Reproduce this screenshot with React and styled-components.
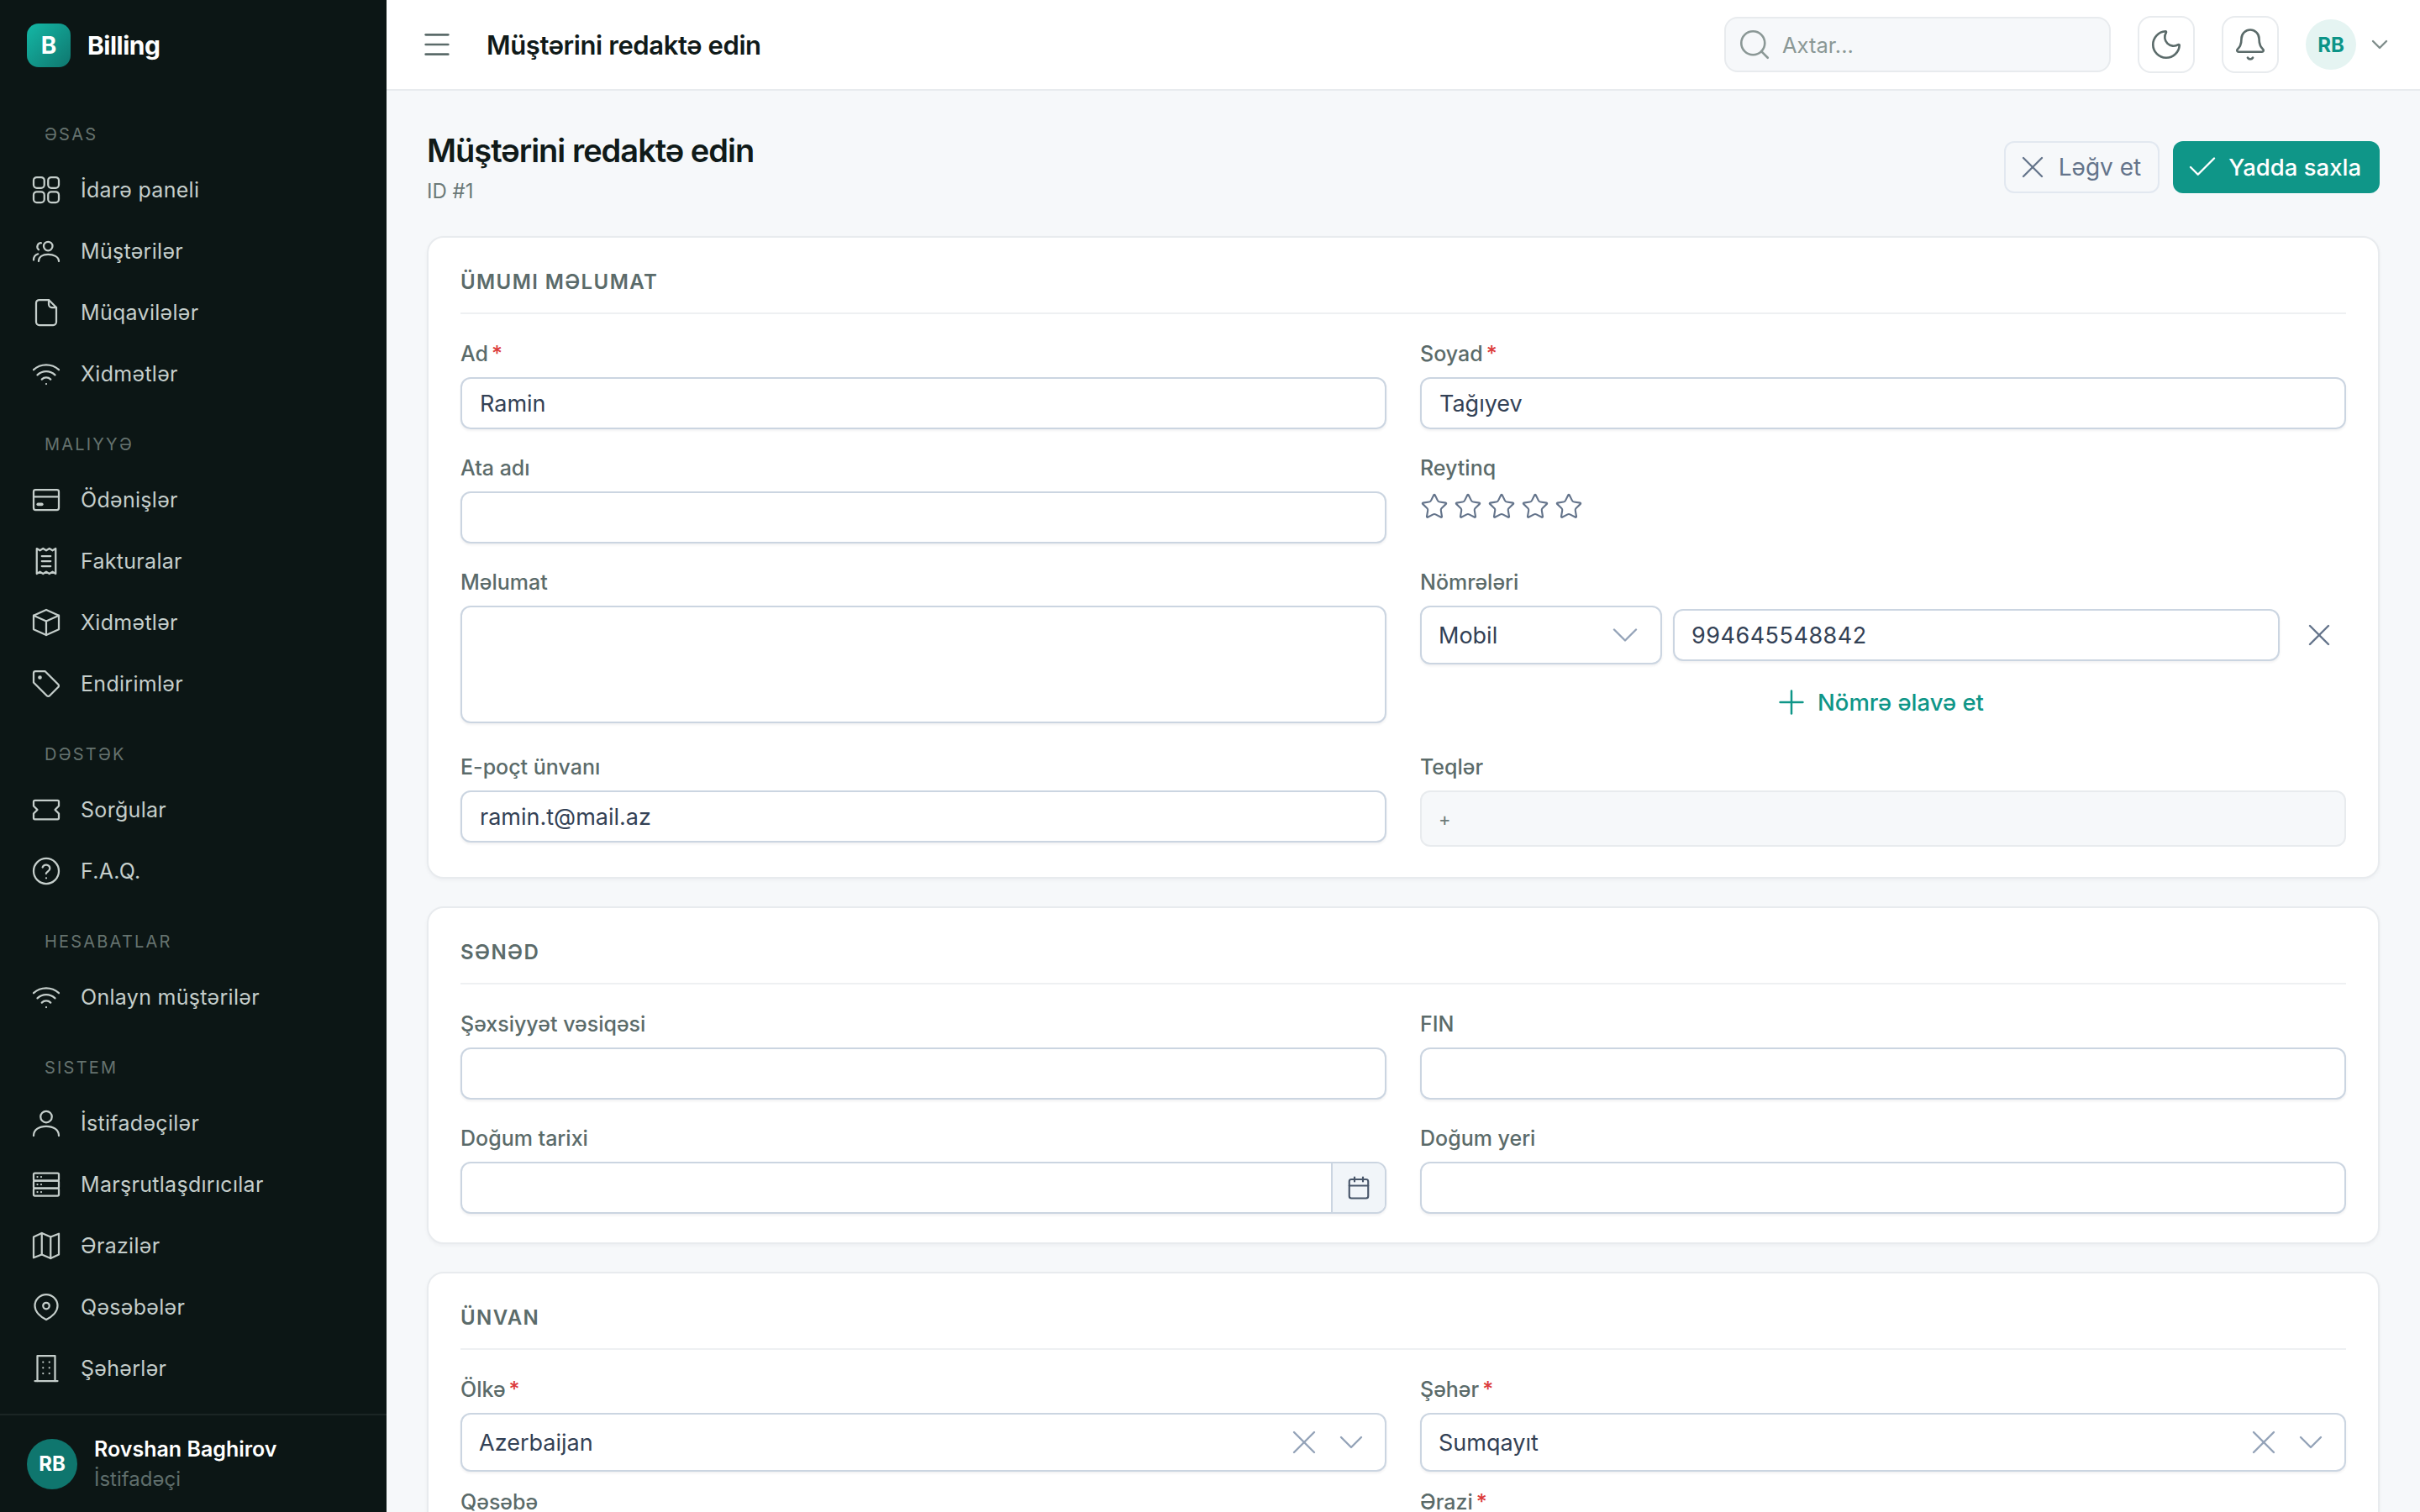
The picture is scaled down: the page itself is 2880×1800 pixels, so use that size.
import React from 'react';
import styled, { createGlobalStyle } from 'styled-components';
import { Search, Moon, Bell, ChevronDown, X, Check, Plus, Star, Calendar, Menu } from 'lucide-react';

const GlobalStyle = createGlobalStyle`
  * { box-sizing: border-box; }
  html, body { margin: 0; padding: 0; height: 1800px; overflow: hidden; background: #f6f8fa; }
  body { font-family: Inter, "Noto Sans", sans-serif; }
`;

const Shell = styled.div`
  display: flex;
  width: 2880px;
  height: 1800px;
  overflow: hidden;
`;

const Sidebar = styled.aside`
  width: 460px;
  flex-shrink: 0;
  height: 100%;
  background: #0c1615;
  display: flex;
  flex-direction: column;
`;

const Brand = styled.div`
  height: 108px;
  padding-left: 32px;
  display: flex;
  align-items: center;
  gap: 20px;
  flex-shrink: 0;
`;

const LogoMark = styled.div`
  width: 52px;
  height: 52px;
  border-radius: 14px;
  background: linear-gradient(135deg, #14b8a6, #0f766e);
  color: #fff;
  font-size: 28px;
  font-weight: 700;
  display: flex;
  align-items: center;
  justify-content: center;
`;

const BrandName = styled.div`
  color: #fff;
  font-size: 30px;
  font-weight: 700;
  letter-spacing: -0.5px;
`;

const Nav = styled.nav`
  flex: 1;
  overflow: hidden;
  padding-top: 37px;
`;

const NavSection = styled.div`
  margin-bottom: 33px;
`;

const SectionLabel = styled.div`
  height: 30px;
  line-height: 30px;
  margin-bottom: 14px;
  padding-left: 53px;
  font-size: 20px;
  font-weight: 400;
  letter-spacing: 2.2px;
  color: #66736f;
`;

const NavItem = styled.div`
  height: 73px;
  padding-left: 37px;
  display: flex;
  align-items: center;
  gap: 23px;
  color: #c5cecb;
  font-size: 25px;
  letter-spacing: 0.3px;
`;

const NavIcon = styled.svg`
  width: 36px;
  height: 36px;
  flex-shrink: 0;
  fill: none;
  stroke: #c5cecb;
  stroke-width: 1.5;
  stroke-linecap: round;
  stroke-linejoin: round;
`;

const UserFooter = styled.div`
  height: 117px;
  flex-shrink: 0;
  border-top: 2px solid #1b2524;
  padding-left: 32px;
  display: flex;
  align-items: center;
  gap: 20px;
`;

const UserAvatar = styled.div`
  width: 60px;
  height: 60px;
  border-radius: 50%;
  background: #0f766e;
  color: #fff;
  font-size: 24px;
  font-weight: 700;
  display: flex;
  align-items: center;
  justify-content: center;
`;

const UserInfo = styled.div`
  display: flex;
  flex-direction: column;
  gap: 6px;
`;

const UserName = styled.div`
  color: #fff;
  font-size: 25px;
  font-weight: 600;
  line-height: 30px;
`;

const UserRole = styled.div`
  color: #5f6e6c;
  font-size: 24px;
  line-height: 30px;
`;

const Main = styled.div`
  flex: 1;
  min-width: 0;
  display: flex;
  flex-direction: column;
`;

const Header = styled.header`
  height: 108px;
  flex-shrink: 0;
  background: #fff;
  border-bottom: 2px solid #e8ebee;
  display: flex;
  align-items: center;
  padding: 0 32px 0 40px;
`;

const MenuButton = styled.div`
  display: flex;
  color: #5b6b6a;
  margin-right: 39px;
`;

const HeaderTitle = styled.div`
  flex: 1;
  font-size: 31px;
  font-weight: 600;
  color: #101a19;
  letter-spacing: -0.4px;
`;

const SearchBox = styled.div`
  width: 460px;
  height: 66px;
  background: #f6f8fa;
  border: 2px solid #e8ebee;
  border-radius: 16px;
  display: flex;
  align-items: center;
  gap: 12px;
  padding-left: 13px;
  color: #8b9896;
  font-size: 25.5px;
  margin-right: 32px;
`;

const IconButton = styled.div`
  width: 68px;
  height: 68px;
  background: #fff;
  border: 2px solid #e8ebee;
  border-radius: 16px;
  display: flex;
  align-items: center;
  justify-content: center;
  color: #5b6b6a;
  margin-right: 32px;
`;

const HeaderAvatar = styled.div`
  width: 60px;
  height: 60px;
  border-radius: 50%;
  background: #e5f4f2;
  color: #0d9488;
  font-size: 24px;
  font-weight: 700;
  display: flex;
  align-items: center;
  justify-content: center;
`;

const HeaderChevron = styled.div`
  display: flex;
  margin-left: 12px;
  color: #7f8d8b;
`;

const Content = styled.main`
  flex: 1;
  overflow: hidden;
  padding: 0 48px;
`;

const PageHead = styled.div`
  height: 173px;
  display: flex;
  align-items: flex-start;
  justify-content: space-between;
`;

const PageTitleBlock = styled.div`
  padding-top: 46px;
`;

const PageTitle = styled.h1`
  margin: 0;
  font-size: 38px;
  line-height: 50px;
  font-weight: 600;
  letter-spacing: -1px;
  color: #101a19;
`;

const PageSub = styled.div`
  margin-top: 9px;
  font-size: 24px;
  line-height: 30px;
  color: #6c7a78;
`;

const PageActions = styled.div`
  display: flex;
  gap: 16px;
  padding-top: 60px;
`;

const ActionButton = styled.div`
  height: 62px;
  padding: ${({ $primary }) => ($primary ? '0 22px 0 14px' : '0 20px 0 10px')};
  border-radius: 12px;
  display: flex;
  align-items: center;
  gap: ${({ $primary }) => ($primary ? 10 : 9)}px;
  font-size: ${({ $primary }) => ($primary ? 27.5 : 28)}px;
  font-weight: ${({ $primary }) => ($primary ? 500 : 400)};
  background: ${({ $primary }) => ($primary ? '#0f9688' : 'transparent')};
  color: ${({ $primary }) => ($primary ? '#fff' : '#64748b')};
  border: ${({ $primary }) => ($primary ? 'none' : '2px solid #e2e8f0')};
`;

const Card = styled.section`
  background: #fff;
  border: 2px solid #e8ebee;
  border-radius: 20px;
  padding: 0 38px 34px;
  margin-bottom: 33px;
  box-shadow: 0 2px 4px rgba(15, 23, 42, 0.04);
`;

const CardTitle = styled.div`
  height: 91px;
  padding-top: 35px;
  line-height: 36px;
  border-bottom: 2px solid #eef0f2;
  font-size: 24px;
  font-weight: 600;
  letter-spacing: 1.4px;
  color: #5b6b6a;
`;

const FieldGrid = styled.div`
  display: grid;
  grid-template-columns: 1fr 1fr;
  column-gap: 40px;
  row-gap: ${({ $gap }) => $gap}px;
  padding-top: 33px;
`;

const Field = styled.div`
  min-width: 0;
`;

const Label = styled.div`
  font-size: 25px;
  line-height: 28px;
  font-weight: 500;
  color: #5b6b6a;
  margin-bottom: 14px;
`;

const Required = styled.span`
  color: #dc3b3b;
  margin-left: 4px;
`;

const Input = styled.div`
  height: 62px;
  flex: ${({ $grow }) => ($grow ? 1 : 'none')};
  background: #fff;
  border: 2px solid #cbd5e1;
  border-radius: 12px;
  box-shadow: 0 2px 3px rgba(15, 23, 42, 0.06);
  padding: 0 21px;
  display: flex;
  align-items: center;
  font-size: 27px;
  color: #334155;
`;

const PhoneInput = styled(Input)`
  letter-spacing: 0.5px;
  padding-left: 20px;
`;

const TextArea = styled(Input)`
  height: 140px;
`;

const Stars = styled.div`
  display: flex;
  gap: 6px;
  color: #64748b;
  padding-top: 1px;
`;

const PhoneRow = styled.div`
  display: flex;
  align-items: center;
  gap: 13px;
  margin-top: 2px;
`;

const SelectBox = styled(Input)`
  height: 70px;
  justify-content: space-between;
  width: ${({ $w }) => ($w ? `${$w}px` : 'auto')};
  padding-right: 16px;
  padding-left: 20px;
`;

const AddressSelect = styled(SelectBox)`
  margin-top: 4px;
`;

const SelectIcons = styled.div`
  display: flex;
  align-items: center;
  gap: 8px;
  color: #94a3b8;
`;

const RemovePhone = styled.div`
  width: 64px;
  margin-left: 2px;
  display: flex;
  justify-content: center;
  color: #64748b;
`;

const AddPhone = styled.div`
  height: 62px;
  margin-top: 14px;
  padding-right: 12px;
  display: flex;
  align-items: center;
  justify-content: center;
  gap: 8px;
  color: #0f9688;
  font-size: 27.5px;
  font-weight: 500;
`;

const TagsBox = styled.div`
  height: 67px;
  margin-bottom: 2px;
  background: #f6f8fa;
  border: 2px solid #e8ebee;
  border-radius: 12px;
  padding: 0 20px;
  display: flex;
  align-items: center;
  font-size: 22px;
  color: #6c7a78;
`;

const DateWrap = styled(Input)`
  padding: 0;
  justify-content: flex-end;
  overflow: hidden;
`;

const DateAddon = styled.div`
  width: 64px;
  height: 100%;
  background: #f1f5f9;
  border-left: 2px solid #cbd5e1;
  display: flex;
  align-items: center;
  justify-content: center;
  color: #475569;
`;

const ic = {
  grid: <><rect x="2" y="2" width="8.5" height="8.5" rx="2.5" /><rect x="13.5" y="2" width="8.5" height="8.5" rx="2.5" /><rect x="2" y="13.5" width="8.5" height="8.5" rx="2.5" /><rect x="13.5" y="13.5" width="8.5" height="8.5" rx="2.5" /></>,
  users: <><circle cx="13.5" cy="8" r="3.5" /><path d="M6 20c0-3.6 3.3-5.5 7.5-5.5S22 16.400 22 20" /><path d="M8 5.500a3 3 0 0 0-2 5.300" /><path d="M2 19c0-2.500 1-4 3.500-4.800" /></>,
  file: <><path d="M6.500 2H14l6 6v11.500a2.500 2.500 0 0 1-2.500 2.500h-11A2.500 2.500 0 0 1 4 19.500v-15A2.500 2.500 0 0 1 6.500 2z" /><path d="M14 2v3.500A2.500 2.500 0 0 0 16.500 8H20" /></>,
  wifi: <><path d="M12 20h.01" /><path d="M2 8.800a15 15 0 0 1 20 0" /><path d="M5 12.900a10 10 0 0 1 14 0" /><path d="M8.500 16.400a5 5 0 0 1 7 0" /></>,
  card: <><rect x="2" y="4" width="20" height="16" rx="1.500" /><path d="M2 9.500h20" /><path d="M5.500 15.500h3" strokeWidth="2.500" /></>,
  receipt: <><path d="M4.500 2l2.500 1.500L9.500 2 12 3.500 14.500 2 17 3.500 19.500 2v20L17 20.500 14.500 22 12 20.500 9.500 22 7 20.500 4.500 22z" /><path d="M8.500 8h7M8.500 12h7M8.500 16h7" /></>,
  cube: <><path d="M12 2l10 4.500v11L12 22 2 17.500v-11z" /><path d="M2 6.500l10 4.500 10-4.500M12 11v11" /></>,
  tag: <><path d="M2 3.500A1.500 1.500 0 0 1 3.500 2H11l10.500 10.500a1.500 1.500 0 0 1 0 2.200l-6.800 6.800a1.500 1.500 0 0 1-2.200 0L2 11z" /><circle cx="7" cy="7" r="0.800" fill="#c5cecb" /></>,
  ticket: <path d="M3 4.500h18a1 1 0 0 1 1 1V9l-3 3 3 3v3.500a1 1 0 0 1-1 1H3a1 1 0 0 1-1-1V15l3-3-3-3V5.500a1 1 0 0 1 1-1z" />,
  help: <><circle cx="12" cy="12" r="10" /><path d="M9.100 9a3 3 0 0 1 5.800 1c0 2-3 2.600-3 4" /><path d="M12 17.500h.01" /></>,
  user: <><circle cx="12" cy="7" r="4.500" /><path d="M2 22c0-5 4.500-7.500 10-7.500S22 17 22 22" /></>,
  server: <><rect x="2" y="3" width="20" height="6" rx="1" /><rect x="2" y="9" width="20" height="6" rx="1" /><rect x="2" y="15" width="20" height="6" rx="1" /><path d="M5 6h.01M8 6h.01M5 12h.01M8 12h.01M5 18h.01M8 18h.01" /></>,
  map: <><path d="M2 5l6.500-3 7 3L22 2.500v16.500L15.500 22l-7-3L2 21.500z" /><path d="M8.500 2v17M15.500 5v17" /></>,
  pin: <><path d="M12 2a9 9 0 0 1 9 9c0 5-5 9-9 11-4-2-9-6-9-11a9 9 0 0 1 9-9z" /><circle cx="12" cy="11" r="2.500" /></>,
  building: <><path d="M5 22V2h14v20" /><path d="M3 22h18" /><path d="M9.500 7h.01M14.500 7h.01M9.500 11.500h.01M14.500 11.500h.01M9.500 16h.01M14.500 16h.01" /></>,
};

const sections = [
  { title: 'ƏSAS', items: [['grid', 'İdarə paneli'], ['users', 'Müştərilər'], ['file', 'Müqavilələr'], ['wifi', 'Xidmətlər']] },
  { title: 'MALIYYƏ', items: [['card', 'Ödənişlər'], ['receipt', 'Fakturalar'], ['cube', 'Xidmətlər'], ['tag', 'Endirimlər']] },
  { title: 'DƏSTƏK', items: [['ticket', 'Sorğular'], ['help', 'F.A.Q.']] },
  { title: 'HESABATLAR', items: [['wifi', 'Onlayn müştərilər']] },
  { title: 'SISTEM', items: [['user', 'İstifadəçilər'], ['server', 'Marşrutlaşdırıcılar'], ['map', 'Ərazilər'], ['pin', 'Qəsəbələr'], ['building', 'Şəhərlər']] },
];

const TextField = ({ label, required, value }) => (
  <Field>
    <Label>{label}{required && <Required>*</Required>}</Label>
    <Input>{value}</Input>
  </Field>
);

const SelectField = ({ label, required, value }) => (
  <Field>
    <Label>{label}{required && <Required>*</Required>}</Label>
    <AddressSelect>
      {value}
      <SelectIcons>
        <X size={48} strokeWidth={1.2} />
        <ChevronDown size={48} strokeWidth={1.2} />
      </SelectIcons>
    </AddressSelect>
  </Field>
);

export default function App() {
  return (
    <>
      <GlobalStyle />
      <Shell>
        <Sidebar>
          <Brand>
            <LogoMark>B</LogoMark>
            <BrandName>Billing</BrandName>
          </Brand>
          <Nav>
            {sections.map((s) => (
              <NavSection key={s.title}>
                <SectionLabel>{s.title}</SectionLabel>
                {s.items.map(([icon, name]) => (
                  <NavItem key={name + icon}>
                    <NavIcon viewBox="0 0 24 24">{ic[icon]}</NavIcon>
                    {name}
                  </NavItem>
                ))}
              </NavSection>
            ))}
          </Nav>
          <UserFooter>
            <UserAvatar>RB</UserAvatar>
            <UserInfo>
              <UserName>Rovshan Baghirov</UserName>
              <UserRole>İstifadəçi</UserRole>
            </UserInfo>
          </UserFooter>
        </Sidebar>
        <Main>
          <Header>
            <MenuButton><Menu size={40} strokeWidth={1.6} /></MenuButton>
            <HeaderTitle>Müştərini redaktə edin</HeaderTitle>
            <SearchBox><Search size={42} strokeWidth={1.5} />Axtar...</SearchBox>
            <IconButton><Moon size={42} strokeWidth={1.5} /></IconButton>
            <IconButton><Bell size={42} strokeWidth={1.5} /></IconButton>
            <HeaderAvatar>RB</HeaderAvatar>
            <HeaderChevron><ChevronDown size={32} strokeWidth={1.8} /></HeaderChevron>
          </Header>
          <Content>
            <PageHead>
              <PageTitleBlock>
                <PageTitle>Müştərini redaktə edin</PageTitle>
                <PageSub>ID #1</PageSub>
              </PageTitleBlock>
              <PageActions>
                <ActionButton><X size={44} strokeWidth={1.3} />Ləğv et</ActionButton>
                <ActionButton $primary><Check size={42} strokeWidth={1.4} />Yadda saxla</ActionButton>
              </PageActions>
            </PageHead>

            <Card>
              <CardTitle>ÜMUMI MƏLUMAT</CardTitle>
              <FieldGrid $gap={32}>
                <TextField label="Ad" required value="Ramin" />
                <TextField label="Soyad" required value="Tağıyev" />
                <TextField label="Ata adı" />
                <Field>
                  <Label>Reytinq</Label>
                  <Stars>
                    {[0, 1, 2, 3, 4].map((i) => <Star key={i} size={34} strokeWidth={1.5} />)}
                  </Stars>
                </Field>
                <Field>
                  <Label>Məlumat</Label>
                  <TextArea />
                </Field>
                <Field>
                  <Label>Nömrələri</Label>
                  <PhoneRow>
                    <SelectBox $w={288}>
                      Mobil
                      <SelectIcons><ChevronDown size={52} strokeWidth={1.1} /></SelectIcons>
                    </SelectBox>
                    <PhoneInput $grow>994645548842</PhoneInput>
                    <RemovePhone><X size={44} strokeWidth={1.3} /></RemovePhone>
                  </PhoneRow>
                  <AddPhone><Plus size={46} strokeWidth={1.3} />Nömrə əlavə et</AddPhone>
                </Field>
                <TextField label="E-poçt ünvanı" value="ramin.t@mail.az" />
                <Field>
                  <Label>Teqlər</Label>
                  <TagsBox>+</TagsBox>
                </Field>
              </FieldGrid>
            </Card>

            <Card>
              <CardTitle>SƏNƏD</CardTitle>
              <FieldGrid $gap={32}>
                <TextField label="Şəxsiyyət vəsiqəsi" />
                <TextField label="FIN" />
                <Field>
                  <Label>Doğum tarixi</Label>
                  <DateWrap>
                    <DateAddon><Calendar size={30} strokeWidth={1.7} /></DateAddon>
                  </DateWrap>
                </Field>
                <TextField label="Doğum yeri" />
              </FieldGrid>
            </Card>

            <Card>
              <CardTitle>ÜNVAN</CardTitle>
              <FieldGrid $gap={22}>
                <SelectField label="Ölkə" required value="Azerbaijan" />
                <SelectField label="Şəhər" required value="Sumqayıt" />
                <SelectField label="Qəsəbə" />
                <SelectField label="Ərazi" required />
              </FieldGrid>
            </Card>
          </Content>
        </Main>
      </Shell>
    </>
  );
}
